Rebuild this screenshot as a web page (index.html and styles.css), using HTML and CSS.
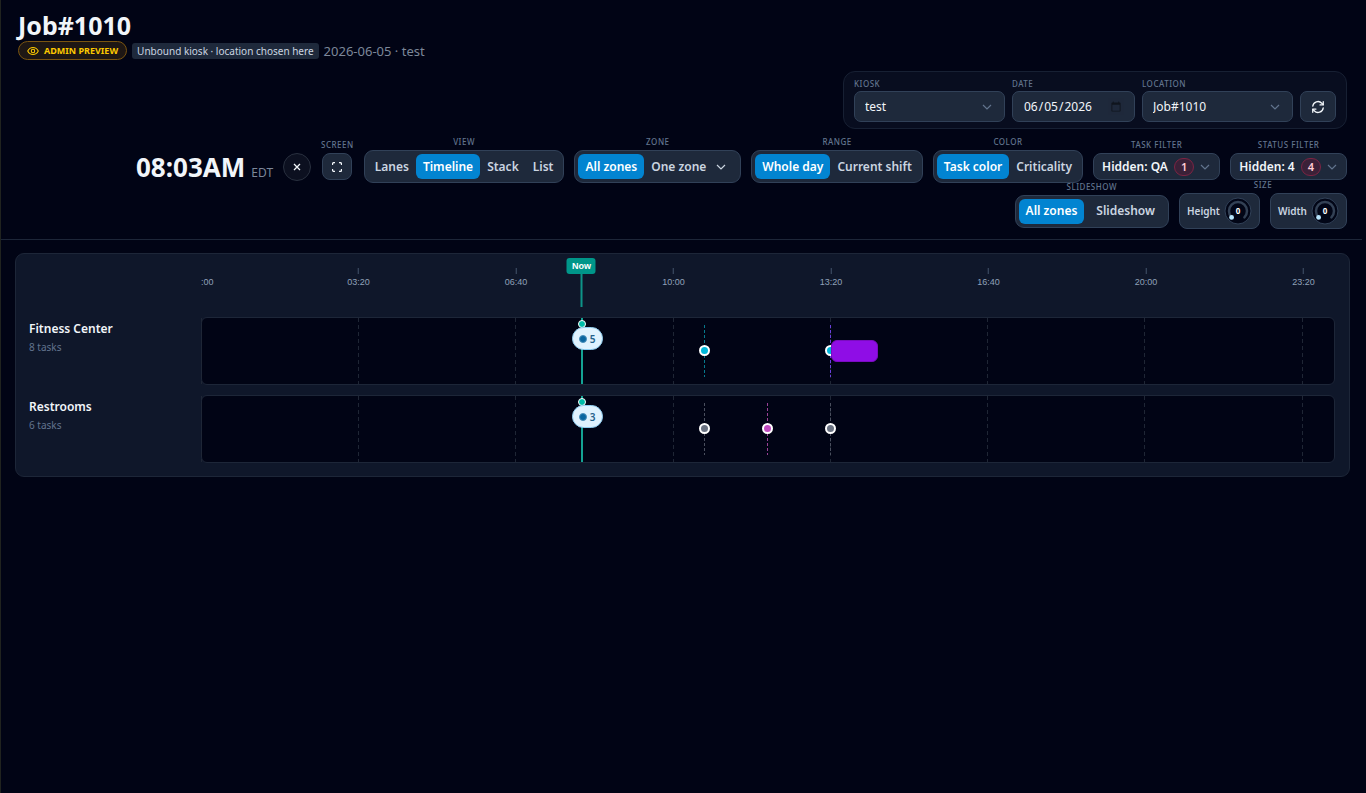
FILE: index.html
```html
<!DOCTYPE html>
<html lang="en">
<head>
  <meta charset="UTF-8">
  <meta name="viewport" content="width=device-width, initial-scale=1.0">
  <title>Job#1010 – Kiosk</title>
  <link rel="stylesheet" href="styles.css">
</head>
<body>
  <header class="header">
    <h1>Job#1010</h1>
    <div class="meta">
      <span class="badge-admin">
        <svg width="12" height="12" viewBox="0 0 24 24" fill="none" stroke="currentColor" stroke-width="2.2"><path d="M1.500 12S5 5 12 5 22.500 12 22.500 12 19 19 12 19 1.500 12 1.500 12z"/><circle cx="12" cy="12" r="3.500"/></svg>
        ADMIN PREVIEW
      </span>
      <span class="badge-kiosk">Unbound kiosk · location chosen here</span>
      <span class="meta-text">2026-06-05 · test</span>
    </div>

    <form class="picker">
      <div class="field">
        <label for="kiosk">Kiosk</label>
        <div class="select-wrap">
          <select id="kiosk"><option>test</option></select>
          <svg class="chevron" viewBox="0 0 12 12"><path d="M2 4l4 4 4-4"/></svg>
        </div>
      </div>
      <div class="field field-date">
        <label for="date">Date</label>
        <input type="date" id="date" value="2026-06-05">
      </div>
      <div class="field">
        <label for="location">Location</label>
        <div class="select-wrap">
          <select id="location"><option>Job#1010</option></select>
          <svg class="chevron" viewBox="0 0 12 12"><path d="M2 4l4 4 4-4"/></svg>
        </div>
      </div>
      <button type="button" class="btn-refresh" aria-label="Refresh">
        <svg width="14" height="14" viewBox="0 0 24 24" fill="none" stroke="currentColor" stroke-width="2.2" stroke-linecap="round" stroke-linejoin="round"><path d="M3 10.500a9 9 0 0 1 15.500-5L21 8"/><path d="M21 3v5.500h-5.500"/><path d="M21 13.500a9 9 0 0 1-15.500 5L3 16"/><path d="M3 21v-5.500h5.500"/></svg>
      </button>
    </form>

    <div class="controls">
      <div class="clock">08:03AM <small>EDT</small></div>
      <button class="btn-close" aria-label="Close">
        <svg width="8" height="8" viewBox="0 0 8 8"><path d="M1 1l6 6M7 1l-6 6"/></svg>
      </button>

      <div class="control">
        <span class="caption">Screen</span>
        <button class="btn-screen" aria-label="Full screen">
          <svg width="10" height="10" viewBox="0 0 10 10"><path d="M.5 3V2A1.500 1.500 0 0 1 2 .5h1M7 .5h1A1.500 1.500 0 0 1 9.500 2v1M9.500 7v1A1.500 1.500 0 0 1 8 9.500H7M3 9.500H2A1.500 1.500 0 0 1 .5 8V7"/></svg>
        </button>
      </div>

      <div class="control">
        <span class="caption">View</span>
        <div class="group">
          <button>Lanes</button>
          <button class="active">Timeline</button>
          <button>Stack</button>
          <button>List</button>
        </div>
      </div>

      <div class="control">
        <span class="caption">Zone</span>
        <div class="group">
          <button class="active">All zones</button>
          <div class="select-wrap zone-select">
            <select aria-label="Zone"><option>One zone</option></select>
            <svg class="chevron" viewBox="0 0 12 12"><path d="M2 4l4 4 4-4"/></svg>
          </div>
        </div>
      </div>

      <div class="control">
        <span class="caption">Range</span>
        <div class="group">
          <button class="active">Whole day</button>
          <button>Current shift</button>
        </div>
      </div>

      <div class="control">
        <span class="caption">Color</span>
        <div class="group">
          <button class="active">Task color</button>
          <button>Criticality</button>
        </div>
      </div>

      <div class="control">
        <span class="caption">Task filter</span>
        <button class="filter">Hidden: QA <span class="count">1</span>
          <svg class="chevron" viewBox="0 0 12 12"><path d="M2 4l4 4 4-4"/></svg>
        </button>
      </div>

      <div class="control">
        <span class="caption">Status filter</span>
        <button class="filter">Hidden: 4 <span class="count">4</span>
          <svg class="chevron" viewBox="0 0 12 12"><path d="M2 4l4 4 4-4"/></svg>
        </button>
      </div>

      <div class="control">
        <span class="caption">Slideshow</span>
        <div class="group group-wide">
          <button class="active">All zones</button>
          <button>Slideshow</button>
        </div>
      </div>

      <div class="control">
        <span class="caption">Size</span>
        <div class="sizes">
          <label class="size">Height
            <span class="knob">
              <svg width="28" height="28" viewBox="0 0 28 28"><circle class="knob-face" cx="14" cy="14" r="13"/><path class="knob-arc" d="M7.600 20.400a9 9 0 1 1 12.800 0"/><circle class="knob-dot" cx="7.600" cy="20.400" r="2.400"/><text x="14" y="17">0</text></svg>
              <input type="range" min="0" max="10" value="0">
            </span>
          </label>
          <label class="size">Width
            <span class="knob">
              <svg width="28" height="28" viewBox="0 0 28 28"><circle class="knob-face" cx="14" cy="14" r="13"/><path class="knob-arc" d="M7.600 20.400a9 9 0 1 1 12.800 0"/><circle class="knob-dot" cx="7.600" cy="20.400" r="2.400"/><text x="14" y="17">0</text></svg>
              <input type="range" min="0" max="10" value="0">
            </span>
          </label>
        </div>
      </div>
    </div>
  </header>

  <main class="timeline">
    <div class="axis">
      <span class="tick tick-first" style="left: 0%">:00</span>
      <span class="tick" style="left: 13.89%">03:20</span>
      <span class="tick" style="left: 27.78%">06:40</span>
      <span class="tick" style="left: 41.67%">10:00</span>
      <span class="tick" style="left: 55.56%">13:20</span>
      <span class="tick" style="left: 69.44%">16:40</span>
      <span class="tick" style="left: 83.33%">20:00</span>
      <span class="tick" style="left: 97.22%">23:20</span>
      <div class="now" style="left: 33.55%"><span>Now</span></div>
    </div>

    <div class="zone">
      <h2>Fitness Center</h2>
      <p>8 tasks</p>
    </div>
    <div class="lane">
      <i class="grid-line" style="left: 0%"></i>
      <i class="grid-line" style="left: 13.89%"></i>
      <i class="grid-line" style="left: 27.78%"></i>
      <i class="grid-line" style="left: 41.67%"></i>
      <i class="grid-line" style="left: 55.56%"></i>
      <i class="grid-line" style="left: 69.44%"></i>
      <i class="grid-line" style="left: 83.33%"></i>
      <i class="grid-line" style="left: 97.22%"></i>
      <div class="now-line" style="left: 33.55%"></div>
      <div class="cluster" style="left: 33.55%"><i></i>5</div>
      <div class="task task-cyan" style="left: 44.44%"></div>
      <div class="task task-violet" style="left: 55.56%"></div>
      <div class="block" style="left: 55.56%; width: 4.2%"></div>
    </div>

    <div class="zone">
      <h2>Restrooms</h2>
      <p>6 tasks</p>
    </div>
    <div class="lane">
      <i class="grid-line" style="left: 0%"></i>
      <i class="grid-line" style="left: 13.89%"></i>
      <i class="grid-line" style="left: 27.78%"></i>
      <i class="grid-line" style="left: 41.67%"></i>
      <i class="grid-line" style="left: 55.56%"></i>
      <i class="grid-line" style="left: 69.44%"></i>
      <i class="grid-line" style="left: 83.33%"></i>
      <i class="grid-line" style="left: 97.22%"></i>
      <div class="now-line" style="left: 33.55%"></div>
      <div class="cluster" style="left: 33.55%"><i></i>3</div>
      <div class="task task-gray" style="left: 44.44%"></div>
      <div class="task task-pink" style="left: 50%"></div>
      <div class="task task-gray" style="left: 55.56%"></div>
    </div>
  </main>
</body>
</html>
```
FILE: styles.css
```css
/* === Colors === */
:root {
  --bg: #010415;
  --panel: #0f172a;
  --surface: #1e293b;
  --border: #314158;
  --line: #1d2638;
  --text: #f1f5f9;
  --text-soft: #cbd5e1;
  --muted: #62748e;
  --accent: #0284d1;
  --teal: #0d9488;
}

*, *::before {
  box-sizing: border-box;
  margin: 0;
  padding: 0;
}
body {
  min-height: 100vh;
  border-left: 1px solid #20231f;
  background: var(--bg);
  color: var(--text);
  font-family: "Noto Sans", "Segoe UI", sans-serif;
  font-size: 12px;
  line-height: 16px;
}
button, input, select {
  font: inherit;
  color: inherit;
}
button { cursor: pointer; }

/* === Header === */
.header {
  display: flex;
  flex-direction: column;
  margin-right: 4px;
  padding: 10px 15px 10px 17px;
  border-bottom: 1px solid var(--line);
}
h1 {
  margin-bottom: 1px;
  font-size: 25px;
  line-height: 30px;
}
.meta {
  display: flex;
  align-items: center;
  gap: 5px;
  height: 19px;
}
.badge-admin {
  display: flex;
  align-items: center;
  gap: 5px;
  height: 19px;
  padding: 0 8px;
  border: 1px solid #7a5410;
  border-radius: 10px;
  background: #1e1714;
  color: #fcc800;
  font-size: 9px;
  font-weight: 700;
}
.badge-kiosk {
  padding: 0 5px;
  border-radius: 3px;
  background: var(--surface);
  color: var(--text-soft);
  font-size: 10px;
}
.meta-text {
  color: #7c8799;
  font-size: 13px;
}

/* === Kiosk / date / location === */
.picker {
  display: flex;
  align-items: flex-end;
  align-self: flex-end;
  gap: 7px;
  margin-top: 11px;
  padding: 5px 10px 6px;
  border: 1px solid #172033;
  border-radius: 12px;
  background: #080d1f;
}
.field { width: 151px; }
.field-date { width: 123px; }
.field label {
  display: block;
  padding-bottom: 1px;
  line-height: 13px;
}
.field label, .caption {
  color: var(--muted);
  font-size: 8px;
  font-weight: 500;
  letter-spacing: 0.5px;
  text-transform: uppercase;
}
.field input, .field select, .btn-refresh {
  width: 100%;
  height: 31px;
  padding: 0 10px;
  border: 1px solid var(--border);
  border-radius: 7px;
  background: var(--surface);
  font-size: 12px;
}
.field input::-webkit-calendar-picker-indicator { opacity: 0.5; }
.btn-refresh {
  display: grid;
  place-items: center;
  width: 36px;
}
.select-wrap {
  display: grid;
  align-items: center;
}
.select-wrap > * { grid-area: 1 / 1; }
.select-wrap select { appearance: none; }
.chevron {
  justify-self: end;
  width: 12px;
  height: 12px;
  fill: none;
  stroke: #62748e;
  stroke-width: 1.2;
  pointer-events: none;
}
.field .chevron { margin-right: 12px; }

/* === Control bar === */
.controls {
  display: flex;
  flex-wrap: wrap;
  align-items: center;
  justify-content: flex-end;
  gap: 10px;
  margin-top: 21px;
}
.clock {
  display: flex;
  align-items: baseline;
  gap: 6px;
  font-size: 26px;
  font-weight: 700;
  line-height: 32px;
}
.clock small {
  color: #7c8799;
  font-size: 12px;
  font-weight: 400;
  line-height: 16px;
}
.btn-close, .btn-screen {
  display: grid;
  place-items: center;
  border: 1px solid #29303f;
  background: #0c1020;
}
.btn-close {
  width: 28px;
  height: 28px;
  border-radius: 50%;
}
.btn-screen {
  width: 30px;
  height: 27px;
  border-color: var(--border);
  border-radius: 8px;
  background: var(--surface);
}
.btn-close svg, .btn-screen svg {
  fill: none;
  stroke: var(--text);
  stroke-width: 1.3;
}
.control {
  display: flex;
  flex-direction: column;
  align-items: center;
}
/* captions hang above the box so every box stays centered in its row */
.caption {
  margin-top: -15px;
  padding-bottom: 1px;
  line-height: 14px;
  white-space: nowrap;
}
.group {
  display: flex;
  height: 33px;
  padding: 3px;
  border: 1px solid var(--border);
  border-radius: 9px;
  background: var(--surface);
}
.group button, .group select {
  padding: 0 7px;
  border: 0;
  border-radius: 6px;
  background: none;
  color: var(--text-soft);
  font-weight: 600;
  white-space: nowrap;
}
.group .active {
  background: var(--accent);
  color: #fff;
}
.zone-select select {
  height: 100%;
  padding-right: 30px;
}
.zone-select .chevron {
  margin-right: 10px;
  stroke: var(--text-soft);
}
.group-wide button:last-child { padding: 0 10px 0 12px; }
.filter {
  display: flex;
  align-items: center;
  height: 27px;
  padding: 0 8px;
  border: 1px solid var(--border);
  border-radius: 8px;
  background: var(--surface);
  font-weight: 600;
  white-space: nowrap;
}
.filter .chevron { margin-left: 5px; }
.count {
  margin-left: 6px;
  padding: 0 6px;
  border: 1px solid #7c2443;
  border-radius: 10px;
  background: #3b2138;
  color: #ffccd3;
  font-size: 11px;
}
.sizes {
  display: flex;
  gap: 10px;
}
.size {
  display: flex;
  align-items: center;
  gap: 4px;
  height: 36px;
  padding: 0 7px;
  border: 1px solid var(--border);
  border-radius: 8px;
  background: var(--surface);
  color: var(--text-soft);
  font-size: 10px;
  font-weight: 600;
}
.knob { display: grid; }
.knob > * { grid-area: 1 / 1; }
.knob input {
  width: 28px;
  opacity: 0;
}
.knob text {
  fill: #fff;
  font-size: 8px;
  font-weight: 700;
  text-anchor: middle;
}
.knob-face {
  fill: #020617;
  stroke: #314158;
}
.knob-arc {
  fill: none;
  stroke: #334155;
  stroke-width: 2.5;
  stroke-linecap: round;
}
.knob-dot { fill: #b8e6fe; }

/* === Timeline === */
.timeline {
  display: grid;
  grid-template-columns: 172px 1fr;
  row-gap: 10px;
  margin: 13px 16px 0 14px;
  padding: 4px 14px 13px 13px;
  border: 1px solid var(--line);
  border-radius: 9px;
  background: var(--panel);
}
.axis {
  grid-column: 2;
  position: relative;
  height: 49px;
}
.tick {
  position: absolute;
  top: 10px;
  transform: translateX(-50%);
  color: #90a1b9;
  font-family: "Liberation Sans", Arial, sans-serif;
  font-size: 9px;
  line-height: 16px;
}
.tick::before {
  content: "";
  display: block;
  width: 1px;
  height: 6px;
  margin: 0 auto;
  background: #45556c;
}
.tick-first { transform: none; }
.tick-first::before { visibility: hidden; }
.now {
  position: absolute;
  top: 0;
  height: 100%;
  transform: translateX(-50%);
  background: linear-gradient(var(--teal), var(--teal)) center / 2px 100% no-repeat;
}
.now span {
  display: block;
  padding: 0 5px;
  border-radius: 3px;
  background: #009689;
  color: #fff;
  font-family: "Liberation Sans", Arial, sans-serif;
  font-size: 9px;
  font-weight: 700;
}
.zone { padding-top: 4px; }
.zone h2 {
  font-size: 12px;
  font-weight: 600;
}
.zone p {
  margin-top: 3px;
  color: var(--muted);
  font-size: 10px;
  line-height: 14px;
}
.lane {
  position: relative;
  height: 68px;
  border: 1px solid var(--line);
  border-radius: 6px;
  background: var(--bg);
}
.grid-line {
  position: absolute;
  top: 0;
  bottom: 0;
  width: 1px;
  margin-left: -1px;
  background: repeating-linear-gradient(#1f2635 0 4px, transparent 4px 7px);
}
.now-line {
  position: absolute;
  top: 0;
  bottom: 0;
  width: 2px;
  margin-left: -1px;
  background: #14a394;
}
.now-line::before {
  content: "";
  position: absolute;
  top: 2px;
  left: -3px;
  width: 8px;
  height: 8px;
  border: 1px solid #fff;
  border-radius: 50%;
  background: #00bba7;
}
.cluster {
  position: absolute;
  top: 9px;
  display: flex;
  align-items: center;
  gap: 3px;
  height: 23px;
  margin-left: -10px;
  padding: 0 6px;
  border: 1px solid #8ecdf0;
  border-radius: 12px;
  background: #dff2fe;
  color: #24618a;
  font-size: 10px;
  font-weight: 600;
}
.cluster i {
  width: 8px;
  height: 8px;
  border: 1px solid #4a8fba;
  border-radius: 50%;
  background: #0a66a0;
}
.task {
  position: absolute;
  top: 7px;
  bottom: 7px;
  width: 1px;
  margin-left: -1px;
  background: repeating-linear-gradient(var(--guide) 0 3px, transparent 3px 5px);
}
.task::before {
  content: "";
  position: absolute;
  top: 50%;
  left: -5px;
  width: 11px;
  height: 11px;
  margin-top: -6px;
  border: 2px solid #fff;
  border-radius: 50%;
  background: var(--dot);
}
.task-cyan { --guide: #07798c; --dot: #00b8db; }
.task-violet { --guide: #6a3fdc; --dot: #00b8db; }
.task-gray { --guide: #4a4f5e; --dot: #6a7282; }
.task-pink { --guide: #9a4196; --dot: #c14bc0; }
.block {
  position: absolute;
  top: 22px;
  height: 22px;
  border: 1px solid #7a0bc0;
  border-radius: 6px;
  background: #8f0de6;
}
```
